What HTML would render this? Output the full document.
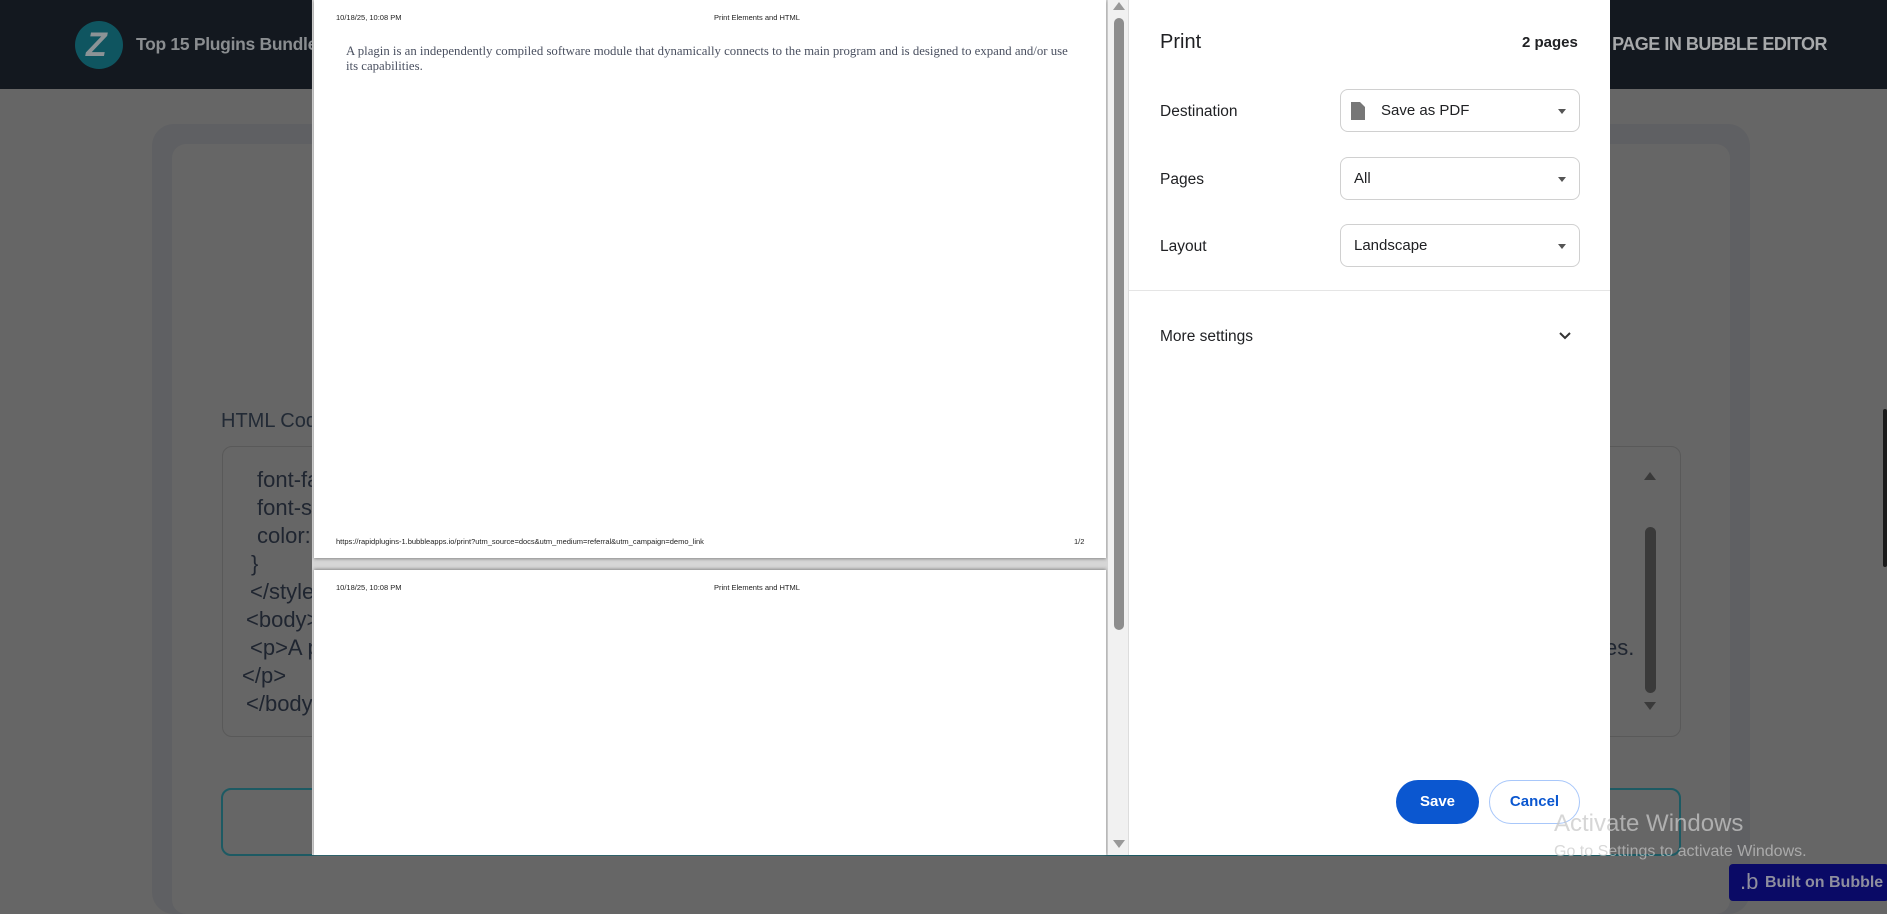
<!DOCTYPE html>
<html><head><meta charset="utf-8"><style>
*{margin:0;padding:0;box-sizing:border-box}
body{width:1887px;height:912px;overflow:hidden;background:#666;font-family:"Liberation Sans",sans-serif;position:relative}
.a{position:absolute}
.hdr{left:0;top:0;width:1887px;height:89px;background:#13181f}
.code{font-family:"Liberation Sans",sans-serif;font-size:22px;color:#1f2530;line-height:28px;white-space:pre}
.sel{left:1340px;width:240px;height:43px;border:1px solid #d0d0d0;border-radius:8px;background:#fff;font-size:15px;color:#202124}
.sel .t{position:absolute;top:12px}
.sel .c{position:absolute;right:13px;top:19px;border-left:4px solid transparent;border-right:4px solid transparent;border-top:5px solid #555}
.lbl{left:1160px;font-size:15.5px;color:#202124}
.pg{font-family:"Liberation Sans",sans-serif;font-size:7.5px;color:#222}
</style></head><body>
<div class="a hdr"></div>
<div class="a" style="left:75px;top:21px;width:48px;height:48px;border-radius:50%;background:#0f5560"></div>
<div class="a" style="left:86px;top:26px;font-size:34px;font-weight:bold;color:#8c9396;font-style:italic">Z</div>
<div class="a" style="left:136px;top:34px;font-size:17.5px;font-weight:bold;color:#8a8d90;letter-spacing:-0.3px">Top 15 Plugins Bundle</div>
<div class="a" style="right:60px;top:34px;font-size:18px;font-weight:bold;color:#a7a9ab;white-space:nowrap;letter-spacing:-0.5px">OPEN THIS PAGE IN BUBBLE EDITOR</div>

<div class="a" style="left:152px;top:124px;width:1598px;height:790px;border-radius:22px;background:#5f6063"></div>
<div class="a" style="left:172px;top:144px;width:1558px;height:770px;border-radius:14px;background:#666"></div>
<div class="a" style="left:221px;top:410px;font-size:20px;color:#222a35">HTML Code</div>
<div class="a" style="left:222px;top:446px;width:1459px;height:291px;border:1px solid #595959;border-radius:10px"></div>
<div class="a code" style="left:257px;top:466px">font-family</div>
<div class="a code" style="left:257px;top:494px">font-size</div>
<div class="a code" style="left:257px;top:522px">color:</div>
<div class="a code" style="left:251px;top:550px">}</div>
<div class="a code" style="left:250px;top:578px">&lt;/style&gt;</div>
<div class="a code" style="left:246px;top:606px">&lt;body&gt;</div>
<div class="a code" style="left:250px;top:634px">&lt;p&gt;A plugin</div>
<div class="a code" style="left:1605px;top:634px">es.</div>
<div class="a code" style="left:242px;top:662px">&lt;/p&gt;</div>
<div class="a code" style="left:246px;top:690px">&lt;/body&gt;</div>
<div class="a" style="left:1644px;top:472px;border-left:6px solid transparent;border-right:6px solid transparent;border-bottom:8px solid #3a3a3a"></div>
<div class="a" style="left:1645px;top:527px;width:11px;height:166px;border-radius:6px;background:#3a3a3a"></div>
<div class="a" style="left:1644px;top:702px;border-left:6px solid transparent;border-right:6px solid transparent;border-top:8px solid #3a3a3a"></div>
<div class="a" style="left:221px;top:788px;width:1460px;height:68px;border:2px solid #1d5a63;border-radius:10px"></div>
<div class="a" style="left:1883px;top:409px;width:4px;height:158px;background:#1a1a1a;border-radius:2px"></div>

<div class="a" style="left:312px;top:0;width:816px;height:855px;background:#d6d6d6"></div>
<div class="a" style="left:314px;top:0;width:792px;height:558px;background:#fff;box-shadow:0 1px 3px #888"></div>
<div class="a pg" style="left:336px;top:13px">10/18/25, 10:08 PM</div>
<div class="a pg" style="left:714px;top:13px">Print Elements and HTML</div>
<div class="a" style="left:346px;top:44px;width:725px;font-family:'Liberation Serif',serif;font-size:12.8px;line-height:14.5px;color:#4a5060">A plagin is an independently compiled software module that dynamically connects to the main program and is designed to expand and/or use its capabilities.</div>
<div class="a pg" style="left:336px;top:537px">https://rapidplugins-1.bubbleapps.io/print?utm_source=docs&amp;utm_medium=referral&amp;utm_campaign=demo_link</div>
<div class="a pg" style="left:1074px;top:537px">1/2</div>
<div class="a" style="left:314px;top:570px;width:792px;height:285px;background:#fff;box-shadow:0 -1px 3px #888"></div>
<div class="a pg" style="left:336px;top:583px">10/18/25, 10:08 PM</div>
<div class="a pg" style="left:714px;top:583px">Print Elements and HTML</div>
<div class="a" style="left:1108px;top:0;width:20px;height:855px;background:#f1f1f1"></div>
<div class="a" style="left:1113px;top:2px;border-left:6px solid transparent;border-right:6px solid transparent;border-bottom:8px solid #999"></div>
<div class="a" style="left:1114px;top:18px;width:10px;height:612px;border-radius:5px;background:#8d8d8d"></div>
<div class="a" style="left:1113px;top:840px;border-left:6px solid transparent;border-right:6px solid transparent;border-top:8px solid #999"></div>

<div class="a" style="left:1128px;top:0;width:482px;height:855px;background:#fff;border-left:1px solid #ddd"></div>
<div class="a" style="left:1160px;top:31px;font-size:20px;color:#202124">Print</div>
<div class="a" style="left:1522px;top:34px;font-size:15px;font-weight:bold;color:#202124">2 pages</div>
<div class="a lbl" style="top:103px">Destination</div>
<div class="a lbl" style="top:171px">Pages</div>
<div class="a lbl" style="top:238px">Layout</div>
<div class="a sel" style="top:89px"><svg class="a" style="left:9px;top:11px" width="16" height="20" viewBox="0 0 16 20"><path d="M1 1h9l5 5v13H1z" fill="#777"/></svg><span class="t" style="left:40px">Save as PDF</span><span class="c"></span></div>
<div class="a sel" style="top:157px"><span class="t" style="left:13px">All</span><span class="c"></span></div>
<div class="a sel" style="top:224px"><span class="t" style="left:13px">Landscape</span><span class="c"></span></div>
<div class="a" style="left:1129px;top:290px;width:481px;height:1px;background:#e5e5e5"></div>
<div class="a lbl" style="top:328px">More settings</div>
<svg class="a" style="left:1558px;top:331px" width="14" height="10" viewBox="0 0 14 10"><path d="M2 2l5 5 5-5" stroke="#333" stroke-width="2" fill="none"/></svg>
<div class="a" style="left:1396px;top:780px;width:83px;height:44px;border-radius:22px;background:#0b57d0;color:#fff;font-weight:bold;font-size:15px;text-align:center;line-height:44px">Save</div>
<div class="a" style="left:1489px;top:780px;width:91px;height:44px;border-radius:22px;border:1px solid #a8c7fa;color:#0b57d0;font-weight:bold;font-size:15px;text-align:center;line-height:42px">Cancel</div>

<div class="a" style="left:1554px;top:810px;font-size:24px;color:rgba(200,200,200,0.75)">Activate Windows</div>
<div class="a" style="left:1554px;top:843px;font-size:16px;color:rgba(200,200,200,0.7)">Go to Settings to activate Windows.</div>
<div class="a" style="left:1729px;top:864px;width:160px;height:37px;border-radius:4px;background:#0a0a66"></div>
<div class="a" style="left:1740px;top:869px;font-size:22px;color:#8e8e9e">.b</div>
<div class="a" style="left:1765px;top:874px;font-size:16px;font-weight:bold;color:#8e8e9e">Built on Bubble</div>
</body></html>
